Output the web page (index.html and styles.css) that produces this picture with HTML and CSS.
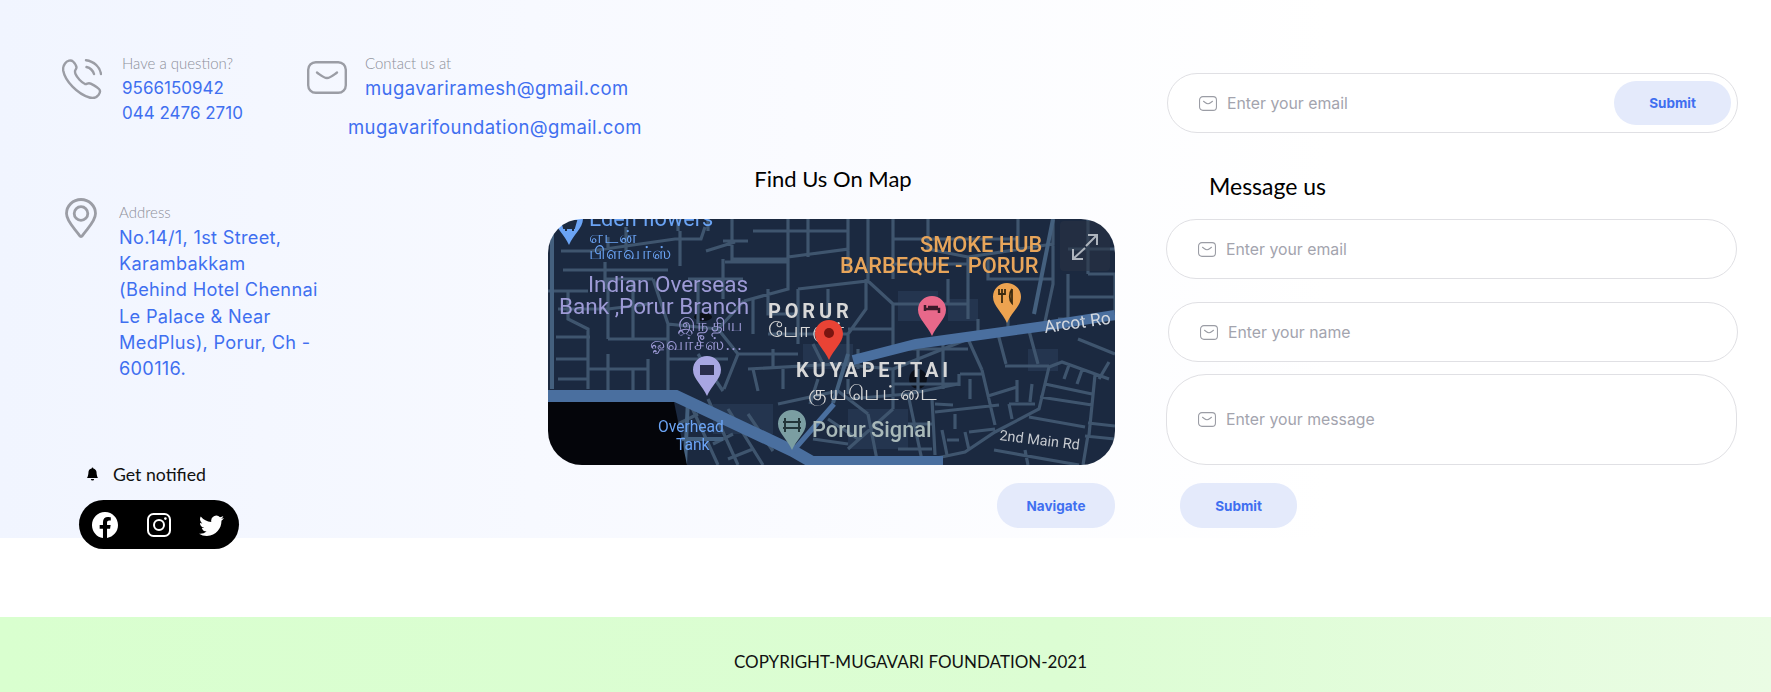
FILE: index.html
```html
<!DOCTYPE html>
<html lang="en">
<head>
<meta charset="utf-8">
<title>Mugavari Foundation - Contact</title>
<link rel="stylesheet" href="styles.css">
</head>
<body>
<svg class="defs" width="0" height="0" aria-hidden="true">
  <symbol id="mail" viewBox="0 0 40 33">
    <rect x="1.2" y="1.2" width="37.600" height="30.600" rx="7.500" fill="none" stroke="currentColor" stroke-width="2.400"/>
    <path d="M10 11.500c3.500 2.500 6.500 5.500 10 5.500s6.500-3 10-5.500" fill="none" stroke="currentColor" stroke-width="2.400" stroke-linecap="round" stroke-linejoin="round"/>
  </symbol>
  <symbol id="pin" viewBox="0 0 28 40">
    <path d="M14 0C6.3 0 0 6.1 0 13.700c0 9.500 9.500 15.300 14 26.300 4.500-11 14-16.800 14-26.300C28 6.100 21.700 0 14 0z"/>
  </symbol>
</svg>
<section class="hero">
  <div class="contact">
    <div class="contact-top">
      <div class="phone-block">
        <svg class="icon-phone" viewBox="0 0 40 40" fill="none" stroke="#9b9da5" stroke-width="2.400" stroke-linecap="round" stroke-linejoin="round">
          <path d="M3 4.500C5 1.500 9 .5 11 2.500c1.500 1.500 3.500 4.500 3.500 6 0 1.500-1.500 2.500-1.500 3.500 0 1 0 2 .5 3 1.500 3.500 6 8.500 9.500 10 1.500.5 2.500-.8 4-.8 2 0 8 3.800 10 5.800 1.500 1.500 1 4-.5 6-2 2.500-5 3.800-9 2.500C15.500 35 3 22 1.200 11.500.8 8.500 1.500 6.500 3 4.500z"/>
          <path d="M24 1.200C32 2.200 38 8 39 15M24.500 8c4 1 6.500 3.800 7.500 7"/>
        </svg>
        <div class="stack">
          <span class="label">Have a question?</span>
          <a class="link number">9566150942</a>
          <a class="link number">044 2476 2710</a>
        </div>
      </div>
      <div class="mail-block">
        <div class="mail-row">
          <svg class="icon-mail-lg"><use href="#mail"/></svg>
          <div class="stack">
            <span class="label">Contact us at</span>
            <a class="link">mugavariramesh@gmail.com</a>
          </div>
        </div>
        <a class="link second-mail">mugavarifoundation@gmail.com</a>
      </div>
    </div>
    <div class="address-block">
      <svg class="icon-location" viewBox="0 0 32 40" fill="none" stroke="#9b9da5" stroke-width="2.800">
        <path d="M16 1.500C8 1.500 1.500 7.800 1.500 15.600c0 8.400 9.300 15.800 13.200 22.200.6 1 2 1 2.600 0 3.900-6.400 13.200-13.800 13.200-22.200C30.500 7.800 24 1.500 16 1.500z"/>
        <circle cx="16" cy="15.500" r="6.800"/>
      </svg>
      <div class="stack">
        <span class="label">Address</span>
        <p class="address">No.14/1, 1st Street,<br>Karambakkam<br>(Behind Hotel Chennai<br>Le Palace &amp; Near<br>MedPlus), Porur, Ch -<br>600116.</p>
      </div>
    </div>
    <div class="notify">
      <svg class="icon-bell" viewBox="0 0 16 16" fill="#000"><path d="M8 16a2 2 0 0 0 2-2H6a2 2 0 0 0 2 2zm.995-14.901a1 1 0 1 0-1.990 0A5.002 5.002 0 0 0 3 6c0 1.098-.5 6-2 7h14c-1.500-1-2-5.902-2-7 0-2.420-1.720-4.440-4.005-4.901z"/></svg>
      <span>Get notified</span>
    </div>
    <div class="social">
      <svg class="icon-fb" viewBox="0 0 16 16" fill="#fff"><path d="M16 8.049c0-4.446-3.582-8.050-8-8.050C3.580 0-.002 3.603-.002 8.050c0 4.017 2.926 7.347 6.750 7.951v-5.625h-2.030V8.050H6.750V6.275c0-2.017 1.195-3.131 3.022-3.131.876 0 1.791.157 1.791.157v1.980h-1.009c-.993 0-1.303.621-1.303 1.258v1.510h2.218l-.354 2.326H9.250V16c3.824-.604 6.750-3.934 6.750-7.951z"/></svg>
      <svg class="icon-ig" viewBox="0 0 24 24" fill="none" stroke="#fff" stroke-width="2"><rect x="1" y="1" width="22" height="22" rx="5.500"/><circle cx="12" cy="12" r="5"/><circle cx="18.400" cy="5.600" r="1.300" fill="#fff" stroke="none"/></svg>
      <svg class="icon-tw" viewBox="0 0 16 14" fill="#fff"><path d="M5.026 14c6.038 0 9.341-5.003 9.341-9.334 0-.14 0-.282-.006-.422A6.685 6.685 0 0 0 16 2.542a6.658 6.658 0 0 1-1.889.518 3.301 3.301 0 0 0 1.447-1.817 6.533 6.533 0 0 1-2.087.793A3.286 3.286 0 0 0 7.875 5.030a9.325 9.325 0 0 1-6.767-3.429 3.289 3.289 0 0 0 1.018 4.382A3.323 3.323 0 0 1 .64 5.575v.045a3.288 3.288 0 0 0 2.632 3.218 3.203 3.203 0 0 1-.865.115 3.230 3.230 0 0 1-.614-.057 3.283 3.283 0 0 0 3.067 2.277A6.588 6.588 0 0 1 .78 12.580a6.320 6.320 0 0 1-.78-.045A9.344 9.344 0 0 0 5.026 14z"/></svg>
    </div>
  </div>

  <div class="map-col">
    <h2 class="map-title">Find Us On Map</h2>
    <div class="map">
      <svg class="map-svg" viewBox="0 0 567 246" width="567" height="246">
        <rect width="567" height="246" fill="#1b2940"/>
        <g fill="#24354f">
          <rect x="350" y="72" width="40" height="30"/><rect x="400" y="80" width="30" height="22"/><rect x="255" y="125" width="50" height="25"/>
          <rect x="300" y="190" width="60" height="40"/><rect x="165" y="185" width="60" height="30"/><rect x="480" y="130" width="30" height="22"/>
        </g>
        <g fill="#0b0f18">
          <ellipse cx="370" cy="160" rx="9" ry="10"/><ellipse cx="155" cy="98" rx="9" ry="4"/>
        </g>
        <path class="roads" d="M15 51H120M13 32H43L127 20H153L157 8M57 43V70M132 12V47M158 32L187 23M60 18V30M0 72H40M20 72V100L40 110V170M8 118H42M8 140H40M160 0V12M184 0V40H240M175 22H200M177 43H240M240 0V38L300 30V0M300 30V54M240 38V70L196 82M196 82L170 110L190 135L176 170M170 110L120 105L105 60M105 60H60V120M60 120H120M120 105V172M120 140H180M150 135L175 172M190 135H250M250 125V70M250 70L320 62L345 85V130M320 62V0M345 85H420M380 0V30L420 38V100M420 38L505 25V0M505 25V65L495 112M470 0V30M520 55V100M520 78H567M540 55H567V95M250 95H220V70M220 115H300V145M280 70V100M300 115L318 90V60M345 110H300M200 150L290 145L345 150L420 120M345 150V190M420 120L434 151M457 147H501M501 148L491 190L447 213L417 233L384 240M501 148L514 143L561 160M497 165L544 175M492 178L544 186M481 198L537 208M540 204L567 207M537 217L567 220M521 146L516 160M534 151L529 165M547 156L541 216M561 143L551 160M434 151L447 206M387 193L451 186M440 177L469 168M469 161V183M484 165L482 183M461 185L464 200M461 185L487 185M384 180L387 236M387 185L405 186M407 195V210M394 211L399 236M399 221L411 221M417 213L421 231M421 213L447 210M412 155H434M411 155V167M422 160V180M446 231L531 246M477 231L480 246M540 216L535 246M345 190L300 230M300 180L360 175L410 165M230 185L290 172L320 195M270 160L262 185M140 180L170 246M160 180L190 246M180 190L215 246M200 195L225 232M320 195L330 246M360 175L375 246"/>
        <path class="roads" d="M78 8V32M130 0V12M205 12H300M260 0V38M345 0V60M345 20H470M345 45H420M440 40V60H505M400 60V85M460 85V112M430 100V118M520 30H567M540 0V55M10 90H60M60 90L100 85M85 60V120M140 60H195M150 60V105M175 40V80M205 80V115M225 130V148M205 150L210 172M235 150V170M265 125L275 145M310 130V150M370 130V145M395 125V150M345 130H420M345 165H410M370 150V172M395 150V170M450 115L458 145M480 108L490 145M510 100H567M530 120L567 135M360 205H384M350 230H384M280 200L310 220M300 160V175M265 220L300 225M100 140V172M60 150H100M60 135V172M85 150V172M40 150H60M10 160H40M150 195L130 205M185 215L165 225M205 230L180 240"/>
        <path class="roads-light" d="M497 40L486 95M4 0V170M140 180L137 246M120 220H175M300 135L285 184M505 0L497 40"/>
        <path class="major-wide" d="M0 177H128L245 232L264 243H395"/>
        <path class="major-thin" d="M286 185L245 232"/>
        <path class="major" d="M305 141L368 125L497 107L567 96"/>
        <path class="black" d="M0 183H126L139 246H0z"/>
        <rect class="ctrl" x="512" y="2" width="50" height="50" rx="4"/>
        <path class="ctrl-icon" d="M525 30V40H535M525 40L537 29M540 16H549V26M549 16L538 27"/>
        <g class="t-blue">
          <text x="41" y="7">Eden flowers</text>
          <text class="t-ta" x="41" y="24">எடன்</text>
          <text class="t-ta" x="41" y="40">பிளவர்ஸ்</text>
          <text class="t-small" x="110" y="213">Overhead</text>
          <text class="t-small" x="128" y="231">Tank</text>
        </g>
        <g class="t-purple">
          <text x="40" y="73">Indian Overseas</text>
          <text x="11" y="95">Bank ,Porur Branch</text>
          <text class="t-ta" x="195" y="112" text-anchor="end">இந்திய</text>
          <text class="t-ta" x="195" y="131" text-anchor="end">ஓவர்சீஸ்...</text>
        </g>
        <g class="t-place">
          <text class="t-caps" x="220" y="99">PORUR</text>
          <text class="t-ta2" x="220" y="118">போரூர்</text>
          <text class="t-caps" x="248" y="158">KUYAPETTAI</text>
          <text class="t-ta2" x="260" y="181">குயபெட்டை</text>
        </g>
        <g class="t-orange">
          <text x="372" y="33">SMOKE HUB</text>
          <text x="292" y="54">BARBEQUE - PORUR</text>
        </g>
        <text class="t-road" transform="translate(497 114) rotate(-8)">Arcot Ro</text>
        <text class="t-signal" x="264" y="218">Porur Signal</text>
        <text class="t-road2" transform="translate(451 221) rotate(7)">2nd Main Rd</text>
        <use href="#pin" x="7" y="-14" width="28" height="40" fill="#6ba4f5"/>
        <path d="M14 2h14l-2 7H16zM17 11h2M24 11h2" stroke="#1c2b41" stroke-width="2" fill="#1c2b41"/>
        <use href="#pin" x="145" y="137" width="28" height="40" fill="#a8a6e2"/>
        <rect x="152" y="146" width="14" height="10" fill="#2a2d4c"/>
        <use href="#pin" x="267" y="101" width="28" height="40" fill="#ea4335"/>
        <circle cx="281" cy="114" r="5" fill="#7a1510"/>
        <use href="#pin" x="370" y="77" width="28" height="40" fill="#e8688a"/>
        <path d="M377 92v-6M377 90h14v4M380 88h10" stroke="#3a1a2a" stroke-width="2.500" fill="none"/>
        <use href="#pin" x="445" y="64" width="28" height="40" fill="#eda350"/>
        <path d="M454 70v14M451 70v5h6v-5M464 70v14c-3-3-3-10 0-14" stroke="#3a2a10" stroke-width="1.800" fill="none"/>
        <use href="#pin" x="230" y="191" width="28" height="40" fill="#7b9ea2"/>
        <path d="M237 213v-14M251 213v-14M235 203h18M235 209h18" stroke="#23363a" stroke-width="2" fill="none"/>
      </svg>
    </div>
    <button class="pill-btn nav-btn" type="button">Navigate</button>
  </div>

  <div class="form-col">
    <label class="field field-subscribe">
      <svg class="icon-mail"><use href="#mail"/></svg>
      <input class="field-input" type="text" placeholder="Enter your email">
      <button class="pill-btn inner-btn" type="button">Submit</button>
    </label>
    <h2 class="msg-title">Message us</h2>
    <label class="field field-email">
      <svg class="icon-mail"><use href="#mail"/></svg>
      <input class="field-input" type="text" placeholder="Enter your email">
    </label>
    <label class="field field-name">
      <svg class="icon-mail"><use href="#mail"/></svg>
      <input class="field-input" type="text" placeholder="Enter your name">
    </label>
    <label class="field field-message">
      <svg class="icon-mail"><use href="#mail"/></svg>
      <input class="field-input" type="text" placeholder="Enter your message">
    </label>
    <button class="pill-btn send-btn" type="button">Submit</button>
  </div>
</section>
<footer class="footer">COPYRIGHT-MUGAVARI FOUNDATION-2021</footer>
</body>
</html>
```
FILE: styles.css
```css
* { box-sizing: border-box; }
html, body { margin: 0; padding: 0; }
body { background: #fff; font-family: "Inter", "Liberation Sans", sans-serif; overflow: hidden; }
.defs { position: absolute; }
h2, p { margin: 0; }

.hero { display: flex; height: 538px; background: linear-gradient(90deg, #f1f5ff 0%, #fafbff 45%, #fff 75%); }

.contact { width: 548px; padding: 53px 0 0 62px; flex: none; }
.contact-top { display: flex; }
.phone-block { width: 246px; display: flex; gap: 20px; align-items: flex-start; flex: none; }
.icon-phone { width: 40px; height: 40px; margin-top: 6px; flex: none; }
.stack { display: flex; flex-direction: column; white-space: nowrap; }
.label { font-family: "Lato", sans-serif; font-weight: 300; font-size: 15px; line-height: 20px; color: #8d8f99; }
.link { font-size: 18.500px; line-height: 25px; color: #3f6ff0; letter-spacing: .4px; margin-top: 3px; }
.link.number { font-size: 17px; letter-spacing: 0; }
.link.number + .link.number { margin-top: 0; }
.mail-block { display: flex; flex-direction: column; flex: none; }
.mail-row { display: flex; gap: 18px; align-items: flex-start; }
.icon-mail-lg { width: 40px; height: 33px; margin: 8px 0 0 -1px; color: #9b9da5; flex: none; }
.second-mail { display: block; margin: 14px 0 0 40px; white-space: nowrap; }

.address-block { display: flex; gap: 22px; margin: 62px 0 0 3px; height: 179px; align-items: flex-start; }
.icon-location { width: 32px; height: 40px; margin-top: -4px; flex: none; }
.address { font-size: 18.200px; letter-spacing: .3px; line-height: 26.200px; color: #3f6ff0; margin-top: 2px; white-space: nowrap; }

.notify { display: flex; align-items: center; gap: 14px; margin: 81px 0 0 24px; height: 24px; font-family: "Lato", sans-serif; font-size: 17.700px; color: #111; }
.icon-bell { width: 13px; height: 14px; }
.social { display: flex; align-items: center; width: 160px; height: 49px; margin: 14px 0 0 17px; padding-left: 13px; border-radius: 25px; background: #000; }
.icon-fb { width: 26px; height: 26px; }
.icon-ig { width: 24px; height: 24px; margin-left: 29px; }
.icon-tw { width: 25px; height: 22px; margin-left: 28px; }

.map-col { width: 567px; margin-right: 51px; padding-top: 164px; flex: none; display: flex; flex-direction: column; }
.map-title { font-family: "Lato", sans-serif; font-weight: 400; font-size: 22px; line-height: 30px; padding-left: 3px; text-align: center; color: #000; }
.map { margin-top: 25px; width: 567px; height: 246px; border-radius: 34px; overflow: hidden; }
.map-svg { display: block; filter: blur(.5px); }
.roads { fill: none; stroke: #3f556e; stroke-width: 3.200; }
.roads-light { fill: none; stroke: #44607e; stroke-width: 4; }
.major { fill: none; stroke: #4a6f9f; stroke-width: 10; }
.major-wide { fill: none; stroke: #4a6f9f; stroke-width: 12; }
.major-thin { fill: none; stroke: #4a6f9f; stroke-width: 5; }
.black { fill: #04050a; }
.ctrl { fill: #2a3343; opacity: .55; }
.ctrl-icon { fill: none; stroke: #aeb4bd; stroke-width: 2; }
.map-svg text { font-family: "Roboto", "Noto Sans", sans-serif; }
.t-blue { fill: #6ba4f5; font-size: 21.700px; }
.t-purple { fill: #9d9ad6; font-size: 22.500px; }
.t-blue .t-ta, .t-purple .t-ta { font-size: 17.500px; letter-spacing: 1.200px; }
.t-ta2 { font-size: 21px; letter-spacing: 1.500px; }
.t-blue .t-small { font-size: 15.600px; }
.t-place { fill: #d8d8d8; }
.t-caps { font-weight: 700; font-size: 20px; letter-spacing: 3.800px; }
.t-orange { fill: #e8a55a; font-size: 21.800px; font-weight: 500; }
.t-road { fill: #d4d8de; font-size: 17.500px; }
.t-road2 { fill: #c4c8ce; font-size: 14.500px; }
.t-signal { fill: #a9b9b9; font-size: 21.800px; font-weight: 500; }

.pill-btn { border: 0; padding: 0; width: 118px; height: 45px; border-radius: 22px; background: #e4eafb; color: #3f6ff0; font-family: "Inter", sans-serif; font-weight: 700; font-size: 13.500px; }
.nav-btn { margin-top: 18px; align-self: flex-end; }

.form-col { width: 572px; padding-top: 73px; flex: none; }
.field { display: flex; align-items: center; height: 60px; border: 1.500px solid #e0e0e4; border-radius: 30px; background: #fff; padding-left: 31px; }
.field-subscribe { margin-left: 1px; width: 571px; padding-right: 6px; }
.field-email { margin-top: 18px; width: 571px; }
.field-name { margin: 23px 0 0 2px; width: 570px; }
.field-message { margin-top: 12px; width: 571px; height: 91px; border-radius: 40px; }
.icon-mail { width: 18px; height: 15px; color: #9b9da5; flex: none; }
.field-input { flex: 1; min-width: 0; margin-left: 10px; border: 0; outline: 0; padding: 0; background: transparent; font-family: "Inter", sans-serif; font-size: 15.800px; color: #333; }
.field-input::placeholder { color: #a3a4ae; opacity: 1; }
.inner-btn { flex: none; height: 44px; width: 117px; }
.msg-title { margin: 38px 0 0 43px; font-family: "Lato", sans-serif; font-weight: 400; font-size: 23px; line-height: 30px; color: #000; }
.send-btn { display: block; margin: 18px 0 0 14px; width: 117px; }

.footer { display: flex; align-items: center; justify-content: center; margin-top: 79px; height: 75px; padding: 13px 0 0 50px; background: linear-gradient(90deg, #d9ffcf 0%, #dcfdd3 60%, #eafce4 100%); font-family: "Lato", sans-serif; font-size: 17px; color: #111; }
```
